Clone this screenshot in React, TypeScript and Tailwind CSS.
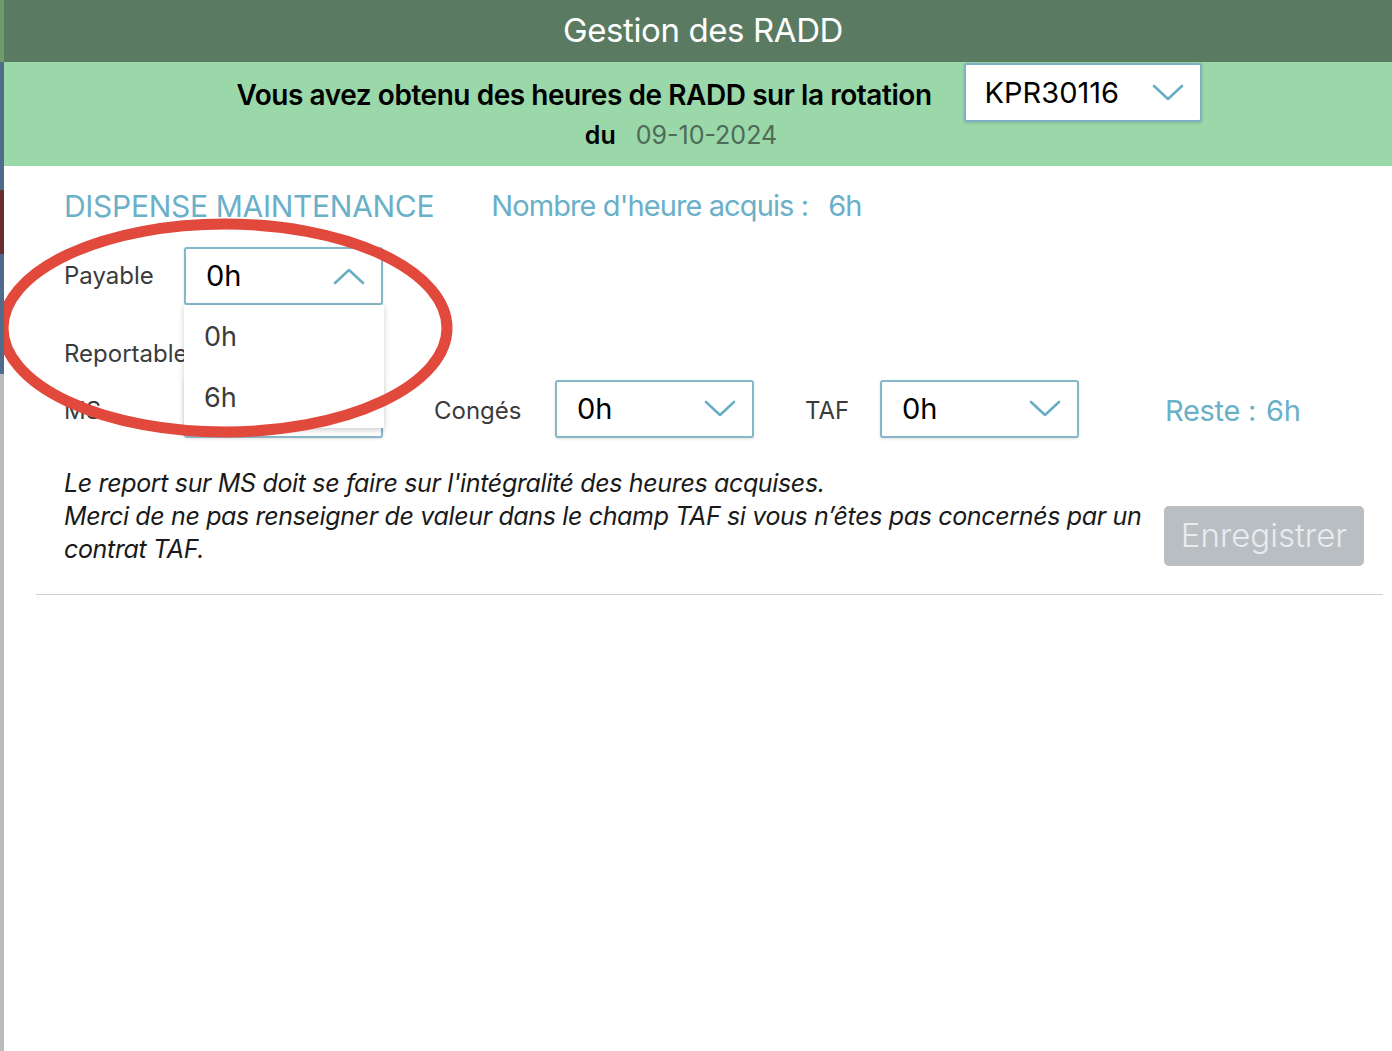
import React from "react";

const Chevron = ({ up = false }: { up?: boolean }) => (
  <svg width="32" height="18" viewBox="0 0 32 18" fill="none">
    <path
      d={up ? "M2 16 L16 3 L30 16" : "M2 2 L16 15 L30 2"}
      stroke="#6aaec4"
      strokeWidth="2.6"
      strokeLinecap="round"
      strokeLinejoin="round"
    />
  </svg>
);

const Select = ({ value, up = false, className = "" }: { value: string; up?: boolean; className?: string }) => (
  <div
    className={`flex items-center justify-between h-[58px] w-[199px] bg-white border-2 border-[#86b7c9] rounded-[3px] pl-5 pr-4 shadow-[0_1px_3px_rgba(0,0,0,0.12)] ${className}`}
  >
    <span className="text-[29px] text-black">{value}</span>
    <Chevron up={up} />
  </div>
);

const App = () => {
  return (
    <div
      className="relative w-full h-[1051px] overflow-hidden bg-white flex"
      style={{ fontFamily: "Inter, 'Noto Sans', sans-serif" }}
    >
      {/* background app peeking at left edge */}
      <div className="w-[4px] flex flex-col shrink-0">
        <div className="h-[62px] bg-[#6f9a6a]" />
        <div className="h-[64px] bg-[#4e6b8c]" />
        <div className="h-[64px] bg-[#4e6b8c]" />
        <div className="h-[64px] bg-[#6a2e2e]" />
        <div className="h-[120px] bg-[#4e6b8c]" />
        <div className="flex-1 bg-[#b9bcbc]" />
      </div>

      <div className="relative flex-1 flex flex-col overflow-hidden">
        {/* title bar */}
        <div className="h-[62px] bg-[#5a7b62] flex items-center justify-center pl-[10px]">
          <span className="text-white text-[33px] tracking-[-0.4px]">Gestion des RADD</span>
        </div>

        {/* rotation band */}
        <div className="h-[104px] bg-[#9ad7a9] flex flex-col items-center">
          <div className="flex items-center gap-[32px] pl-[42px] mt-[1px]">
            <span className="text-[28px] font-semibold text-black tracking-[-0.45px] mt-[5px]">
              Vous avez obtenu des heures de RADD sur la rotation
            </span>
            <div className="flex items-center justify-between h-[59px] w-[238px] bg-white border-2 border-[#7fb0c4] rounded-[3px] pl-[19px] pr-[16px] shadow-[0_1px_3px_rgba(0,0,0,0.15)]">
              <span className="text-[29px] text-black">KPR30116</span>
              <Chevron />
            </div>
          </div>
          <div className="flex items-center gap-[20px] -mt-[5px] pr-[34px]">
            <span className="text-[25px] font-semibold text-black">du</span>
            <span className="text-[25px] text-[#4d6b58]">09-10-2024</span>
          </div>
        </div>

        {/* content */}
        <div className="flex flex-col pl-[60px] pr-[28px]">
          <div className="flex items-center mt-[20px] h-[40px]">
            <span className="text-[30px] text-[#6ab0c8] tracking-[-0.3px]">DISPENSE MAINTENANCE</span>
            <span className="ml-[57px] text-[29px] text-[#6ab0c8] tracking-[-0.9px]">
              Nombre d'heure acquis :
              <span className="ml-[20px]">6h</span>
            </span>
          </div>

          <div className="flex items-center h-[58px] mt-[21px]">
            <span className="w-[120px] text-[24px] text-[#3b3b3b]">Payable</span>
            <Select value="0h" up />
          </div>

          <div className="flex items-center h-[40px] mt-[29px]">
            <span className="w-[120px] text-[24px] text-[#3b3b3b]">Reportable</span>
          </div>

          <div className="flex items-center h-[58px] mt-[6px]">
            <span className="w-[120px] text-[24px] text-[#3b3b3b] mt-[3px]">MS</span>
            <Select value="0h" />
            <span className="ml-[51px] w-[121px] text-[24px] text-[#3b3b3b] mt-[3px]">Congés</span>
            <Select value="0h" />
            <span className="ml-[51px] w-[75px] text-[24px] text-[#3b3b3b] mt-[3px]">TAF</span>
            <Select value="0h" />
            <span className="ml-[86px] text-[29px] text-[#6ab0c8] tracking-[-0.3px] mt-[3px]">
              Reste :<span className="ml-[10px]">6h</span>
            </span>
          </div>

          <div className="flex items-center mt-[29px]">
            <p className="w-[1080px] text-[25px] italic text-[#1a1a1a] leading-[33px] tracking-[-0.35px]">
              Le report sur MS doit se faire sur l'intégralité des heures acquises.
              <br />
              Merci de ne pas renseigner de valeur dans le champ TAF si vous n’êtes pas concernés par un contrat TAF.
            </p>
            <button className="ml-[20px] mt-[38px] h-[60px] w-[200px] rounded-[5px] bg-[#b9bec3] text-[33px] font-light text-[#e8ecef]">
              Enregistrer
            </button>
          </div>
        </div>
        <div className="ml-[32px] mr-[9px] mt-[28px] h-[1px] bg-[#cfcfcf]" />

        {/* open dropdown list */}
        <div className="absolute left-[180px] top-[305px] w-[200px] h-[123px] bg-white shadow-[0_2px_6px_rgba(0,0,0,0.2)] flex flex-col pl-[20px]">
          <span className="h-[64px] flex items-center text-[27px] text-[#3b3b3b]">0h</span>
          <span className="h-[58px] flex items-center text-[27px] text-[#3b3b3b]">6h</span>
        </div>

        {/* red annotation ellipse */}
        <svg className="absolute -left-[4px] top-[210px]" width="470" height="250" viewBox="0 0 470 250">
          <ellipse
            cx="225"
            cy="118"
            rx="222"
            ry="104"
            fill="none"
            stroke="#e0493b"
            strokeWidth="11"
          />
        </svg>
      </div>
    </div>
  );
};

export default App;
